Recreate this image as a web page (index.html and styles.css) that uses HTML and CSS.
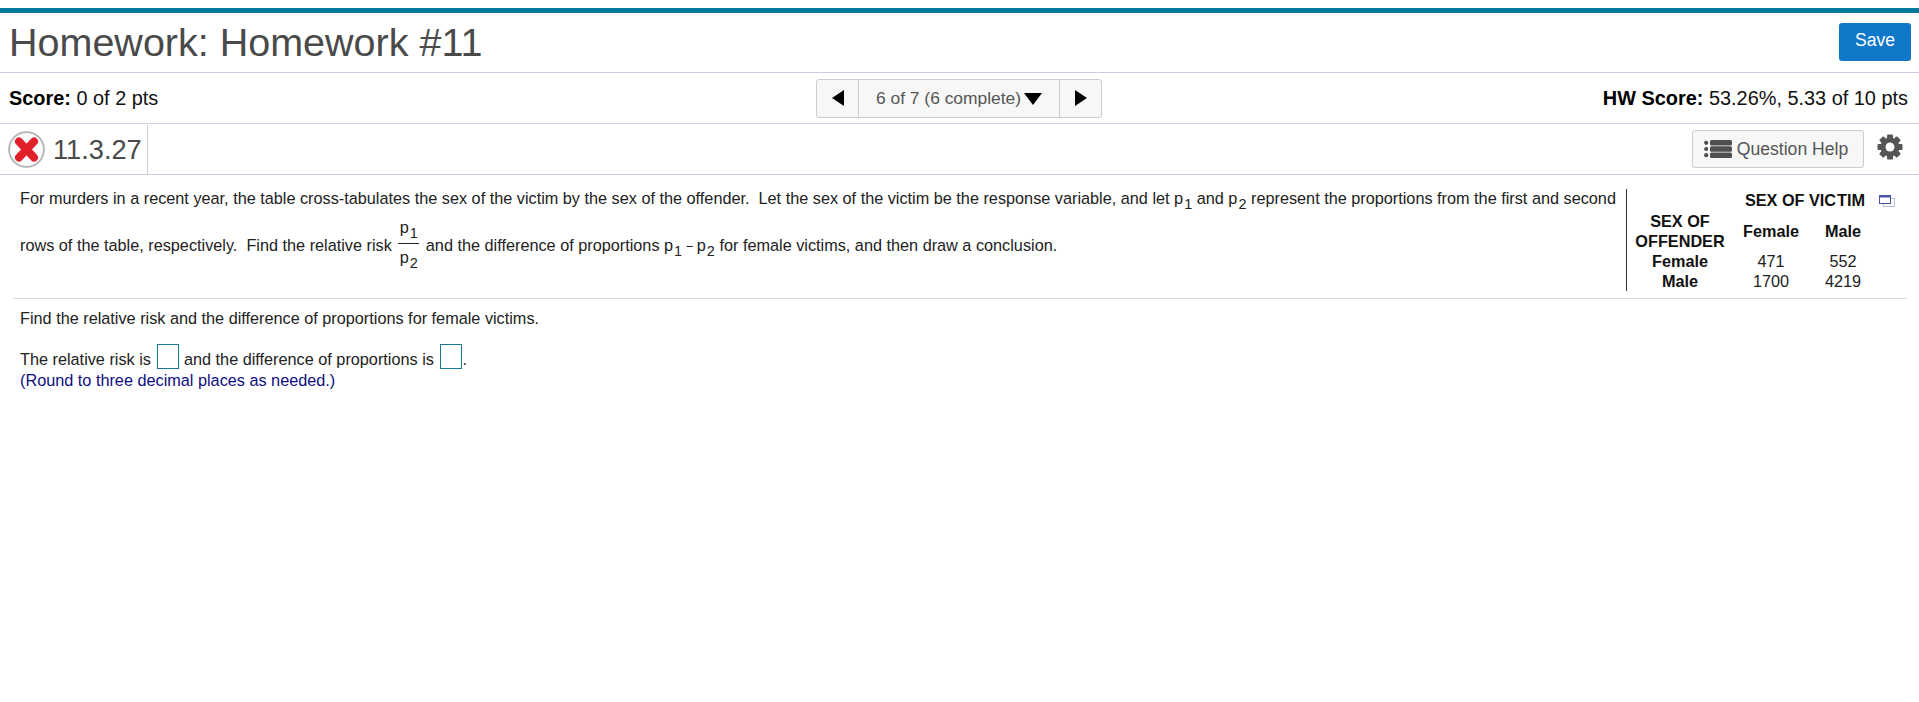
FILE: index.html
```html
<!DOCTYPE html>
<html lang="en">
<head>
<meta charset="utf-8">
<title>Homework: Homework #11</title>
<link rel="stylesheet" href="styles.css">
</head>
<body>
<header class="title-bar">
  <h1 class="title">Homework: Homework #11</h1>
  <button class="save">Save</button>
</header>
<section class="score-bar">
  <div class="score"><b>Score:</b> 0 of 2 pts</div>
  <nav class="pager">
    <span class="pager-btn"><svg width="12" height="16" viewBox="0 0 12 16"><path d="M12 0V16L0 8Z"/></svg></span>
    <span class="pager-label">6 of 7 (6 complete)<svg class="caret" width="18" height="12" viewBox="0 0 18 12"><path d="M0 0H18L9 12Z"/></svg></span>
    <span class="pager-btn"><svg width="12" height="16" viewBox="0 0 12 16"><path d="M0 0V16L12 8Z"/></svg></span>
  </nav>
  <div class="hw-score"><b>HW Score:</b> 53.26%, 5.33 of 10 pts</div>
</section>
<section class="question-bar">
  <div class="qid">
    <svg class="status" width="37" height="37" viewBox="0 0 37 37">
      <circle cx="18.5" cy="18.5" r="17.4" fill="#fbfbfb" stroke="#b4b4b4" stroke-width="1.8"/>
      <path d="M11 10.5L26 26.5M26 10.5L11 26.5" stroke="#df2029" stroke-width="8" stroke-linecap="round"/>
    </svg>
    <span class="qnum">11.3.27</span>
  </div>
  <div class="tools">
    <button class="help">
      <svg width="28" height="18" viewBox="0 0 28 18"><g fill="#4f4f4f"><circle cx="2.2" cy="2.8" r="2.1"/><circle cx="2.2" cy="9" r="2.1"/><circle cx="2.2" cy="15.2" r="2.1"/><rect x="6" y="0" width="22" height="5.4" rx="1.5"/><rect x="6" y="6.3" width="22" height="5.4" rx="1.5"/><rect x="6" y="12.6" width="22" height="5.4" rx="1.5"/></g></svg>
      Question Help
    </button>
    <svg class="gear" width="26" height="26" viewBox="0 0 26 26">
      <g fill="#555">
        <rect x="10" y="0.5" width="6" height="25" rx="1"/>
        <rect x="10" y="0.5" width="6" height="25" rx="1" transform="rotate(45 13 13)"/>
        <rect x="10" y="0.5" width="6" height="25" rx="1" transform="rotate(90 13 13)"/>
        <rect x="10" y="0.5" width="6" height="25" rx="1" transform="rotate(135 13 13)"/>
      </g>
      <circle cx="13" cy="13" r="7" fill="none" stroke="#555" stroke-width="5"/>
      <circle cx="13" cy="13" r="4.5" fill="#fff"/>
    </svg>
  </div>
</section>
<main class="content">
  <div class="prompt">
    <div class="prompt-text">
      <p class="line-one">For murders in a recent year, the table cross-tabulates the sex of the victim by the sex of the offender.&nbsp; Let the sex of the victim be the response variable, and let <span class="var">p<sub>1</sub></span> and <span class="var">p<sub>2</sub></span> represent the proportions from the first and second</p>
      <p class="line-two">rows of the table, respectively.&nbsp; Find the relative risk <span class="frac"><span class="num">p<sub>1</sub></span><span class="den">p<sub>2</sub></span></span> and the difference of proportions <span class="var">p<sub>1</sub></span> <span class="minus">&minus;</span> <span class="var">p<sub>2</sub></span> for female victims, and then draw a conclusion.</p>
    </div>
    <div class="data">
      <table class="cross">
        <tr class="top"><td></td><th colspan="2">SEX OF VIC<span class="tight">T</span>IM</th></tr>
        <tr class="heads"><th class="offender">SEX OF<br>OFFENDER</th><th>Female</th><th>Male</th></tr>
        <tr><th>Female</th><td>471</td><td>552</td></tr>
        <tr><th>Male</th><td>1700</td><td>4219</td></tr>
      </table>
      <svg class="popout" width="16" height="12" viewBox="0 0 16 12"><rect x="4.5" y="3.5" width="11" height="8" fill="#fff" stroke="#b9bfdf"/><rect x="0.5" y="0.5" width="11" height="8" fill="#fff" stroke="#4a55a8"/><rect x="0.5" y="0.5" width="11" height="2" fill="#4a55a8"/></svg>
    </div>
  </div>
  <div class="answer">
    <p class="instruction">Find the relative risk and the difference of proportions for female victims.</p>
    <p class="fill">The relative risk is <span class="box"></span> and the difference of proportions is <span class="box"></span>.</p>
    <p class="hint">(Round to three decimal places as needed.)</p>
  </div>
</main>
</body>
</html>
```
FILE: styles.css
```css
* { box-sizing: border-box; }
html, body { margin: 0; padding: 0; background: #fff; }
body {
  padding-top: 8px;
  font-family: "Liberation Sans", Arial, sans-serif;
  font-size: 16.26px;
  color: #222;
}
p { margin: 0; }

.title-bar {
  height: 65px;
  border-top: 5px solid #047a9c;
  border-bottom: 1px solid #c9cfe0;
  display: flex;
  align-items: flex-start;
  justify-content: space-between;
  padding: 0 8px 0 9px;
}
.title {
  margin: 0;
  font-size: 39.5px;
  font-weight: 400;
  line-height: 47px;
  padding-top: 6px;
  color: #4a4a4a;
}
.save {
  margin-top: 10px;
  width: 72px;
  height: 38px;
  border: 0;
  border-radius: 3px;
  background: #0f78c9;
  color: #fff;
  font: 17.6px "Liberation Sans", Arial, sans-serif;
  padding: 0 0 3px;
}

.score-bar {
  height: 51px;
  border-bottom: 1px solid #c9cfe0;
  display: grid;
  grid-template-columns: 1fr auto 1fr;
  align-items: center;
  padding: 0 11px 0 9px;
  font-size: 19.9px;
  color: #111;
}
.score-bar b { color: #000; }
.hw-score { text-align: right; }
.pager {
  display: flex;
  width: 286px;
  height: 39px;
  margin-left: 1px;
  margin-top: 5px;
  margin-bottom: 5px;
  border: 1px solid #ccc;
  border-radius: 3px;
  background: #f7f7f7;
  color: #555;
  font-size: 17.4px;
}
.pager-btn {
  width: 41px;
  display: flex;
  align-items: center;
  justify-content: center;
}
.pager-label {
  flex: 1;
  display: flex;
  align-items: center;
  justify-content: center;
  gap: 3px;
  border-left: 1px solid #ccc;
  border-right: 1px solid #ccc;
}
.caret { margin-top: 2px; }

.question-bar {
  height: 51px;
  border-bottom: 1px solid #c9cfe0;
  display: flex;
  justify-content: space-between;
  align-items: flex-start;
  padding: 0 16px 0 8px;
}
.qid {
  height: 49px;
  width: 140px;
  border-right: 1px solid #c9cfe0;
  display: flex;
  align-items: center;
  gap: 8px;
  margin-top: 1px;
}
.qnum {
  font-size: 27.2px;
  color: #4a4a4a;
}
.status { flex: none; }
.tools {
  display: flex;
  align-items: center;
  gap: 13px;
  margin-top: 6px;
}
.help {
  width: 172px;
  height: 38px;
  display: flex;
  align-items: center;
  justify-content: center;
  gap: 5px;
  border: 1px solid #ccc;
  border-radius: 3px;
  background: #f7f7f7;
  color: #555;
  font: 17.6px "Liberation Sans", Arial, sans-serif;
  padding: 0 4px 0 0;
}
.gear { margin-bottom: 4px; }

.content { padding: 0 12px 0 13px; }
.prompt {
  display: flex;
  justify-content: space-between;
  height: 124px;
  border-bottom: 1px solid #d5d8e0;
  padding-top: 14px;
}
.prompt-text { padding-left: 7px; width: 1613px; margin-top: -1px; }
.line-one { line-height: 20px; }
.line-two { margin-top: 9px; line-height: 20px; }
sub { font-size: 14.5px; line-height: 0; vertical-align: -5px; margin-left: 1px; }
.frac {
  display: inline-flex;
  flex-direction: column;
  align-items: center;
  vertical-align: middle;
  width: 21px;
  margin: 0 2px 10px;
  line-height: 20px;
}
.num { border-bottom: 1px solid #222; width: 100%; text-align: center; height: 27px; }
.den { padding-top: 3px; height: 23px; width: 100%; text-align: center; }
.minus { font-size: 13px; margin: 0 -1px; }
.data {
  position: relative;
  width: 281px;
  height: 102px;
  border-left: 1px solid #333;
  padding-left: 1px;
  flex: none;
}
.cross { border-collapse: collapse; color: #222; margin-left: -1px; }
.cross th, .cross td { padding: 0; text-align: center; line-height: 20px; }
.cross th { color: #111; font-weight: 700; }
.cross tr > :nth-child(1) { width: 106px; }
.cross .heads > :nth-child(2), .cross tr > td:nth-child(2) { width: 76px; }
.cross .heads > :nth-child(3), .cross tr > td:nth-child(3) { width: 68px; }
.cross .top th { height: 22px; }
.tight { margin-left: 1px; }
.popout { position: absolute; left: 252px; top: 6px; }
.answer { padding-left: 7px; }
.instruction { line-height: 20px; margin-top: 9px; }
.fill { line-height: 20px; margin-top: 16px; }
.box {
  display: inline-block;
  width: 22px;
  height: 25px;
  border: 1px solid #1a7a96;
  vertical-align: -4px;
  margin: 0 0 0 2px;
}
.hint { color: #0e0e80; line-height: 20px; margin-top: 1px; }
```
